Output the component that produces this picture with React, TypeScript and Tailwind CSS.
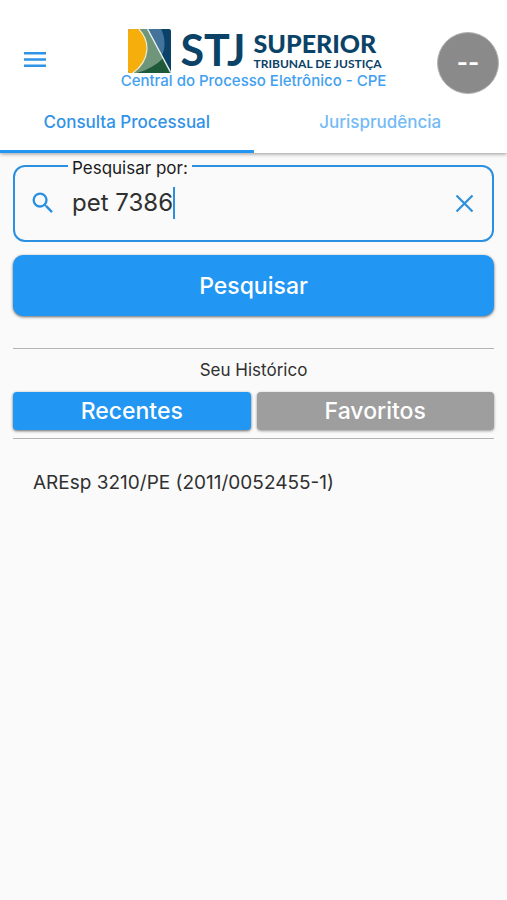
import { useState } from 'react'

function CourtEmblem() {
  return (
    <svg viewBox="0 0 44 44" preserveAspectRatio="none" className="h-11 w-[43px]" aria-hidden="true">
      <defs>
        <clipPath id="emblem">
          <rect width="44" height="44" rx="2" />
        </clipPath>
      </defs>
      <g clipPath="url(#emblem)">
        <rect width="44" height="44" fill="#0b4267" />
        <path d="M20 0H34C38 8 39 20 34 27L20 0Z" fill="#43739a" />
        <path d="M11 0H20L44 44H4L18 22Z" fill="#6f967b" />
        <path d="M44 44L36 29C29 36 20 41 9 44Z" fill="#1e5a3a" />
        <path d="M0 0H11C22 12 23 30 5 44H0Z" fill="#f5ae0c" />
        <path d="M11 0C23 12 23 31 5 44" fill="none" stroke="#f3efc9" strokeWidth="1.2" />
        <path d="M20 0L44 44" fill="none" stroke="#e9f1ea" strokeWidth="1.4" />
      </g>
    </svg>
  )
}

function Logo() {
  return (
    <div className="flex h-11 items-start pl-[3px] font-['Lato',sans-serif] text-[#0b4267]">
      <CourtEmblem />
      <span className="ml-[9px] text-[43px] leading-[42px] font-bold">STJ</span>
      <div className="ml-2 flex flex-col whitespace-nowrap">
        <span className="text-[25px] leading-7 font-black">SUPERIOR</span>
        <span className="text-[12px] leading-[14px] font-bold">TRIBUNAL DE JUSTIÇA</span>
      </div>
    </div>
  )
}

const tabs = ['Consulta Processual', 'Jurisprudência']
const history = ['AREsp 3210/PE (2011/0052455-1)']

export default function App() {
  const [query, setQuery] = useState('pet 7386')

  return (
    <div className="min-h-screen bg-[#fafafa] font-['Inter',sans-serif] text-[#303030]">
      <header className="bg-white shadow-[0_1px_4px_rgba(0,0,0,0.4)]">
        <div className="grid h-[94px] grid-cols-[1fr_auto_1fr] items-start">
          <button type="button" aria-label="Menu" className="mt-12 ml-6 h-6 w-6 text-[#2f93e6]">
            <svg viewBox="0 0 24 24" className="h-6 w-6" fill="currentColor">
              <path d="M0 4h22v2.5H0zM0 10.2h22v2.5H0zM0 16.4h22v2.5H0z" />
            </svg>
          </button>
          <div className="flex flex-col items-center pt-[29px]">
            <Logo />
            <p className="text-[15px] leading-4 font-medium whitespace-nowrap text-[#42a0f0]">
              Central do Processo Eletrônico - CPE
            </p>
          </div>
          <button
            type="button"
            aria-label="Perfil"
            className="mt-8 mr-2 flex h-[62px] w-[62px] items-center justify-center justify-self-end rounded-full border border-[#b5b5b5] bg-[#8a8a8a] text-[24px] font-bold text-white"
          >
            --
          </button>
        </div>
        <nav className="grid grid-cols-2 text-[17px] font-medium">
          {tabs.map((tab, i) => (
            <button
              key={tab}
              type="button"
              className={
                i === 0
                  ? 'h-[59px] border-b-3 border-[#2196f3] pt-0.5 text-[#3193e6]'
                  : 'h-[59px] border-b-3 border-transparent pt-0.5 text-[#74baf5]'
              }
            >
              {tab}
            </button>
          ))}
        </nav>
      </header>

      <main className="px-[13px] pt-px">
        <fieldset className="rounded-[12px] border-2 border-[#2b90e0] pb-3">
          <legend className="ml-[53px] px-1 pt-1 text-[17px] leading-5 text-[#1c1c1c]">
            <label htmlFor="query">Pesquisar por:</label>
          </legend>
          <div className="flex h-[50px] items-center pr-4 pl-[14px] text-[#2b90e0]">
            <svg viewBox="0 0 24 24" className="h-7 w-7 shrink-0" fill="currentColor" aria-hidden="true">
              <path d="M15.5 14h-.79l-.28-.27A6.47 6.47 0 0 0 16 9.5 6.5 6.5 0 1 0 9.5 16c1.61 0 3.09-.59 4.23-1.57l.27.28v.79l5 4.99L20.49 19zm-6 0a4.5 4.5 0 1 1 0-9 4.5 4.5 0 0 1 0 9z" />
            </svg>
            <div className="relative ml-[15px] min-w-0 flex-1 text-[24px] leading-8">
              <input
                id="query"
                type="text"
                value={query}
                onChange={(e) => setQuery(e.target.value)}
                className="block w-full bg-transparent text-[#303030] caret-[#2196f3] outline-none"
              />
              <span aria-hidden="true" className="pointer-events-none absolute inset-y-0 left-0 border-r-2 border-[#2b90e0] whitespace-pre">
                <span className="invisible">{query}</span>
              </span>
            </div>
            <button type="button" aria-label="Limpar" onClick={() => setQuery('')} className="h-6 w-6">
              <svg viewBox="0 0 24 24" className="h-6 w-6" fill="none" stroke="currentColor" strokeWidth="2.2">
                <path d="M4.500 4.500l16 16M20.500 4.500L4.500 20.500" />
              </svg>
            </button>
          </div>
        </fieldset>

        <button
          type="button"
          className="mt-[13px] h-[61px] w-full rounded-[10px] bg-[#2196f3] pt-0.5 text-[23px] font-medium text-white shadow-[0_1px_3px_rgba(0,0,0,0.6)]"
        >
          Pesquisar
        </button>

        <section className="mt-8">
          <div className="border-y border-[#b4b4b4] pb-2">
            <h2 className="pt-[10px] pb-[11px] text-center text-[17px] leading-[22px]">Seu Histórico</h2>
            <div className="grid grid-cols-2 gap-[6px] text-[23px] leading-[37px] font-medium text-white">
              <button type="button" className="h-[38px] rounded-[4px] bg-[#2196f3] shadow-[0_1px_3px_rgba(0,0,0,0.6)]">
                Recentes
              </button>
              <button type="button" className="h-[38px] rounded-[4px] bg-[#9e9e9e] shadow-[0_1px_3px_rgba(0,0,0,0.4)]">
                Favoritos
              </button>
            </div>
          </div>
          <ul className="px-5 pt-8 text-[19px] leading-6">
            {history.map((entry) => (
              <li key={entry}>{entry}</li>
            ))}
          </ul>
        </section>
      </main>
    </div>
  )
}
